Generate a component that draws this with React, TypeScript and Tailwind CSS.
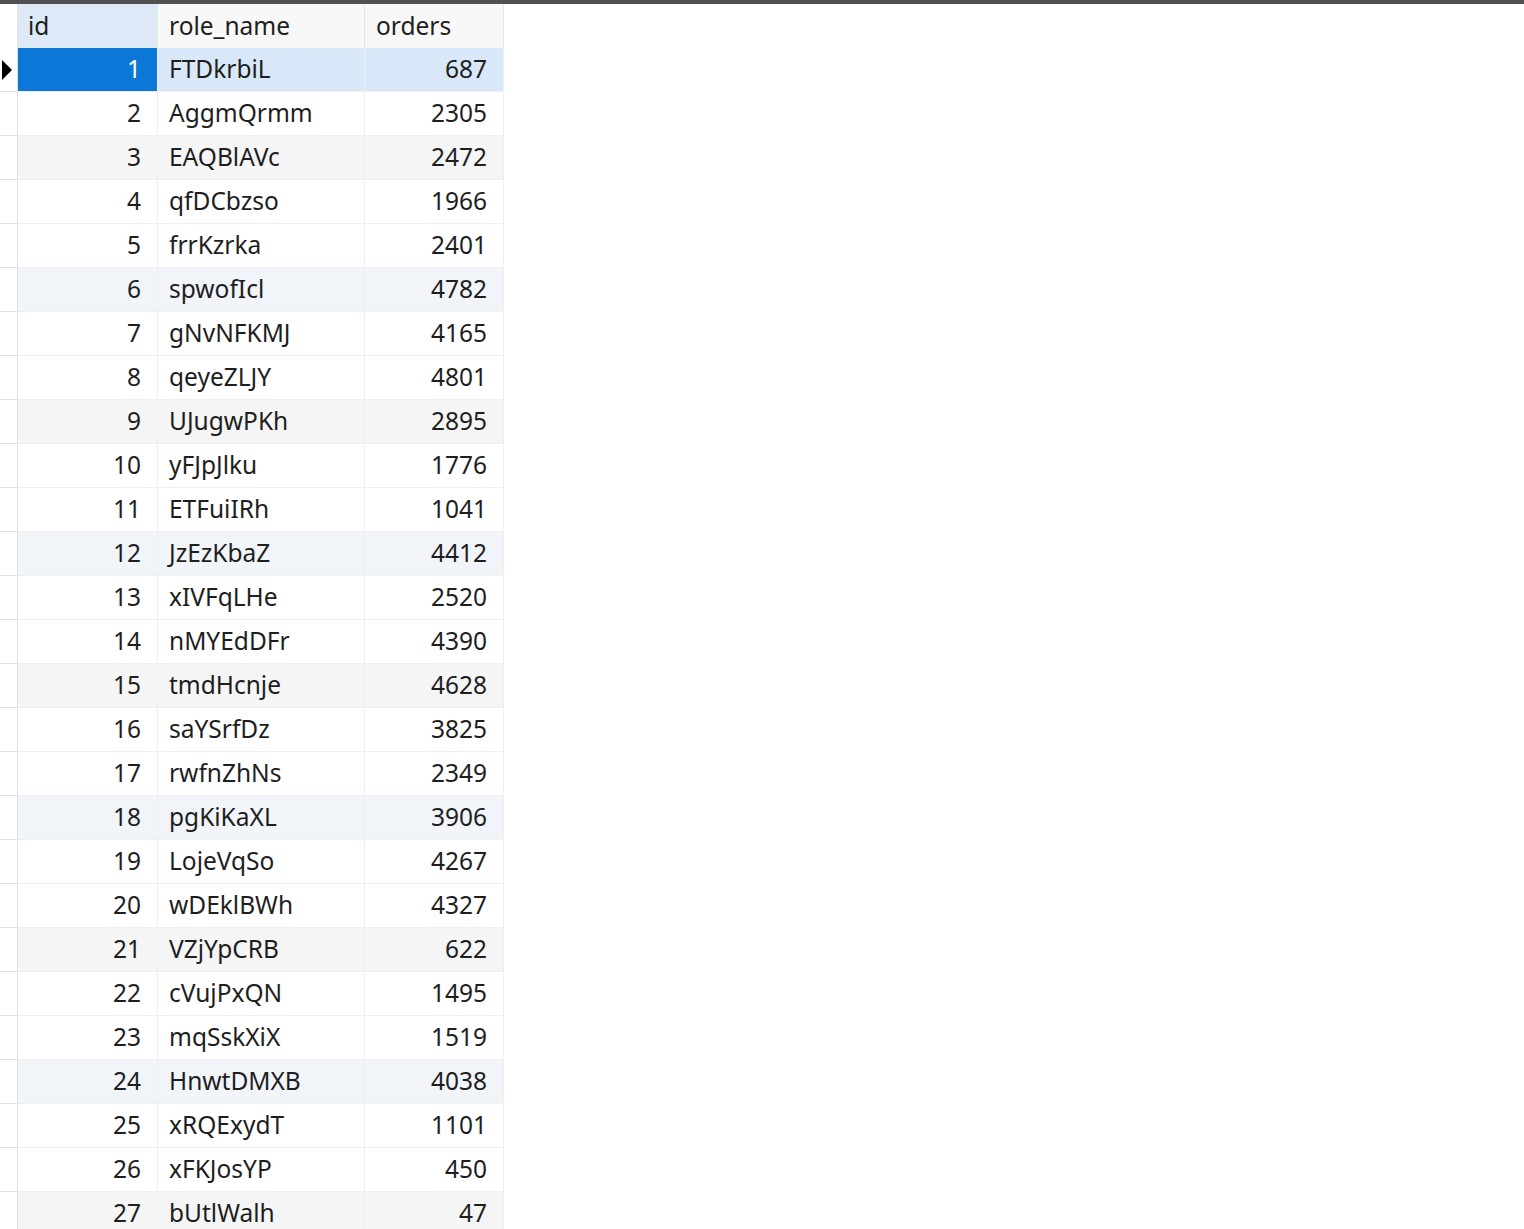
import React from "react";

const rows: [number, string, number][] = [
  [1, "FTDkrbiL", 687],
  [2, "AggmQrmm", 2305],
  [3, "EAQBlAVc", 2472],
  [4, "qfDCbzso", 1966],
  [5, "frrKzrka", 2401],
  [6, "spwofIcl", 4782],
  [7, "gNvNFKMJ", 4165],
  [8, "qeyeZLJY", 4801],
  [9, "UJugwPKh", 2895],
  [10, "yFJpJlku", 1776],
  [11, "ETFuiIRh", 1041],
  [12, "JzEzKbaZ", 4412],
  [13, "xIVFqLHe", 2520],
  [14, "nMYEdDFr", 4390],
  [15, "tmdHcnje", 4628],
  [16, "saYSrfDz", 3825],
  [17, "rwfnZhNs", 2349],
  [18, "pgKiKaXL", 3906],
  [19, "LojeVqSo", 4267],
  [20, "wDEklBWh", 4327],
  [21, "VZjYpCRB", 622],
  [22, "cVujPxQN", 1495],
  [23, "mqSskXiX", 1519],
  [24, "HnwtDMXB", 4038],
  [25, "xRQExydT", 1101],
  [26, "xFKJosYP", 450],
  [27, "bUtlWalh", 47],
];

function rowBg(id: number): string {
  if (id === 1) return "bg-[#d9e8f8]";
  if (id % 6 === 0) return "bg-[#f1f5fa]";
  if (id % 3 === 0) return "bg-[#f5f5f5]";
  return "bg-white";
}

export default function App() {
  return (
    <div
      className="w-[1524px] h-[1229px] overflow-hidden bg-white text-[#1e1e1e] text-[24.5px]"
      style={{ fontFamily: '"Noto Sans", "Open Sans", sans-serif' }}
    >
      <div className="h-[4px] bg-[#505050]" />
      <div className="flex h-[44px]">
        <div className="w-[18px] bg-white border-r border-[#e6e6e6]" />
        <div className="w-[140px] bg-[#dde9f6] border-r border-[#e6e6e6] flex items-center pl-[10px]">id</div>
        <div className="w-[207px] bg-[#f8f8f8] border-r border-[#e6e6e6] flex items-center pl-[11px]">role_name</div>
        <div className="w-[139px] bg-[#f8f8f8] border-r border-[#e6e6e6] flex items-center pl-[11px]">orders</div>
      </div>
      {rows.map(([id, name, orders]) => {
        const sel = id === 1;
        return (
          <div key={id} className="flex h-[44px]">
            <div className="w-[18px] bg-white border-r border-b border-[#e0e0e0] flex items-center">
              {sel && (
                <svg width="12" height="20" viewBox="0 0 12 20" className="ml-[1px]">
                  <path d="M1 0 L11 10 L1 20 Z" fill="#000" />
                </svg>
              )}
            </div>
            <div
              className={
                "w-[140px] border-r border-b border-[#efefef] flex items-center justify-end pr-[16px] " +
                (sel ? "bg-[#0b78d8] text-white" : rowBg(id))
              }
            >
              {id}
            </div>
            <div className={"w-[207px] border-r border-b border-[#efefef] flex items-center pl-[11px] " + rowBg(id)}>
              {name}
            </div>
            <div className={"w-[139px] border-r border-b border-[#efefef] flex items-center justify-end pr-[16px] " + rowBg(id)}>
              {orders}
            </div>
          </div>
        );
      })}
    </div>
  );
}
